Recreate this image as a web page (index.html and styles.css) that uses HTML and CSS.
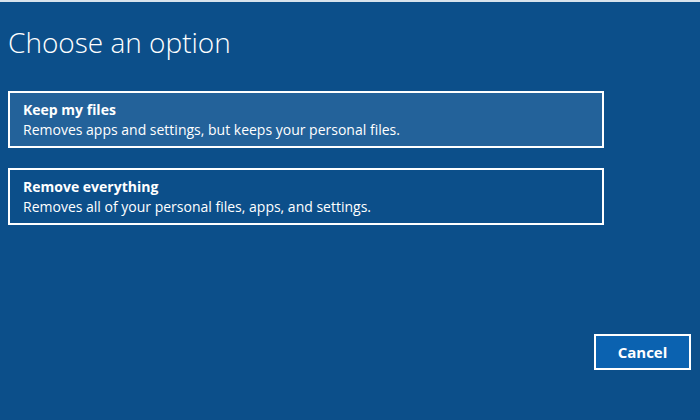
FILE: index.html
```html
<!DOCTYPE html>
<html lang="en">
<head>
<meta charset="utf-8">
<title>Choose an option</title>
<link rel="stylesheet" href="styles.css">
</head>
<body>
<div class="screen">
  <h1 class="title">Choose an option</h1>
  <div class="options">
    <button class="option option-hover">
      <span class="option-name">Keep my files</span>
      <span class="option-desc">Removes apps and settings, but keeps your personal files.</span>
    </button>
    <button class="option">
      <span class="option-name">Remove everything</span>
      <span class="option-desc">Removes all of your personal files, apps, and settings.</span>
    </button>
  </div>
  <div class="footer">
    <button class="cancel">Cancel</button>
  </div>
</div>
</body>
</html>
```
FILE: styles.css
```css
html, body {
  margin: 0;
  padding: 0;
}
body {
  background: #0c4f8a;
  font-family: "Open Sans", "Noto Sans", "Liberation Sans", sans-serif;
  color: #ffffff;
}
.screen {
  height: 420px;
  box-sizing: border-box;
  border-top: 2px solid #d9e3ec;
  padding: 0 9px 50px 8px;
  display: flex;
  flex-direction: column;
}
.title {
  margin: 23px 0 0 0;
  font-weight: 300;
  font-size: 28px;
  line-height: 34px;
}
.options {
  margin-top: 32px;
  display: flex;
  flex-direction: column;
  gap: 20px;
}
.option {
  width: 596px;
  height: 57px;
  box-sizing: border-box;
  border: 2px solid #ffffff;
  background: transparent;
  color: #ffffff;
  font-family: inherit;
  text-align: left;
  padding: 6px 13px;
  display: flex;
  flex-direction: column;
  justify-content: center;
}
.option-hover {
  background: #23629a;
}
.option-name {
  font-weight: 700;
  font-size: 14px;
  line-height: 20px;
}
.option-desc {
  font-size: 14px;
  line-height: 20px;
}
.footer {
  margin-top: auto;
  display: flex;
  justify-content: flex-end;
}
.cancel {
  width: 97px;
  height: 36px;
  box-sizing: border-box;
  border: 2px solid #ffffff;
  background: #0b62b0;
  color: #ffffff;
  font-family: inherit;
  font-weight: 700;
  font-size: 15px;
}
```
